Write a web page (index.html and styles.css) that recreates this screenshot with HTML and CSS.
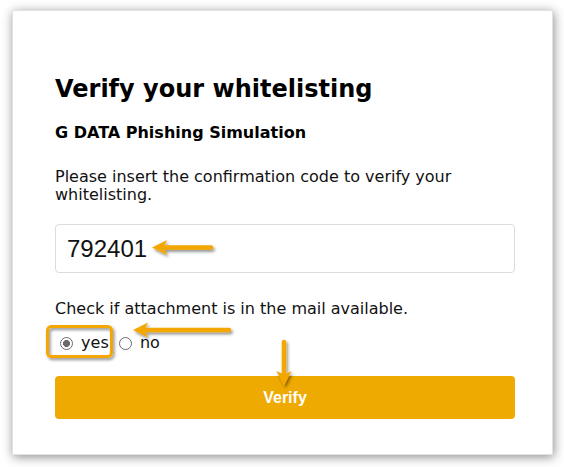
FILE: index.html
```html
<!DOCTYPE html>
<html lang="en">
<head>
<meta charset="utf-8">
<title>Verify your whitelisting</title>
<link rel="stylesheet" href="styles.css">
</head>
<body>
<div class="card">
  <h1 class="title">Verify your whitelisting</h1>
  <h2 class="sub">G DATA Phishing Simulation</h2>
  <p class="text">Please insert the confirmation code to verify your whitelisting.</p>
  <input class="code" type="text" value="792401">
  <p class="text label">Check if attachment is in the mail available.</p>
  <div class="radios">
    <label class="opt"><input class="radio" type="radio" name="att" checked> yes</label>
    <label class="opt"><input class="radio" type="radio" name="att"> no</label>
  </div>
  <button class="btn" type="button">Verify</button>
</div>
<svg class="overlay" width="564" height="467" viewBox="0 0 564 467">
  <defs>
    <filter id="sh" x="-30%" y="-30%" width="160%" height="160%">
      <feDropShadow dx="1.5" dy="2" stdDeviation="1.4" flood-color="#000" flood-opacity="0.45"/>
    </filter>
  </defs>
  <g filter="url(#sh)" fill="#f4a700" stroke="#f4a700" stroke-linecap="round">
    <line x1="211" y1="247.5" x2="162" y2="247.5" stroke-width="4.5"/>
    <polygon stroke="none" points="152,247.5 167,240 163.5,247.5 167,255"/>
    <line x1="229" y1="330" x2="143" y2="330" stroke-width="4.5"/>
    <polygon stroke="none" points="133,330 148,322.5 144.5,330 148,337.5"/>
    <line x1="284" y1="342" x2="284" y2="376" stroke-width="4.5"/>
    <polygon stroke="none" points="284,386 276.5,371 284,374.5 291.5,371"/>
    <rect x="47.5" y="326.5" width="64" height="30" rx="4" fill="none" stroke-width="3"/>
  </g>
</svg>
</body>
</html>
```
FILE: styles.css
```css
html, body {
  margin: 0;
  padding: 0;
  background: #ffffff;
}
body {
  min-height: 467px;
  font-family: "DejaVu Sans", Verdana, sans-serif;
  color: #111;
}
.card {
  box-sizing: border-box;
  width: 541px;
  margin: 10px 0 0 12px;
  padding: 64px 37px 35px 42px;
  background: #fff;
  border: 1px solid #e2e2e2;
  box-shadow: 1px 2px 10px rgba(0, 0, 0, 0.45);
}
.title {
  margin: 0;
  font-size: 24px;
  line-height: 28px;
  font-weight: bold;
  color: #000;
}
.sub {
  margin: 20px 0 0;
  font-size: 16px;
  line-height: 20px;
  font-weight: bold;
  color: #000;
}
.text {
  margin: 25px 0 0;
  font-size: 16px;
  line-height: 18px;
}
.code {
  display: block;
  box-sizing: border-box;
  width: 100%;
  height: 49px;
  margin: 20px 0 0;
  padding: 0 11px;
  border: 1px solid #dcdcdc;
  border-radius: 4px;
  font-family: "Liberation Sans", Arial, sans-serif;
  font-size: 24px;
  color: #111;
  background: #fff;
  outline: none;
}
.label {
  margin-top: 27px;
}
.radios {
  height: 18px;
  margin-top: 16px;
  font-size: 16px;
  line-height: 18px;
}
.opt {
  color: #111;
}
.radio {
  appearance: none;
  -webkit-appearance: none;
  box-sizing: border-box;
  width: 13px;
  height: 13px;
  margin: 3px 3px 0 5px;
  border: 1px solid #6b6b6b;
  border-radius: 50%;
  background: #fff;
  vertical-align: -2px;
}
.radio:checked {
  background: radial-gradient(circle, #6a6a6a 0 3.2px, #fff 3.8px);
}
.btn {
  display: block;
  width: 100%;
  height: 43px;
  margin-top: 24px;
  border: 0;
  border-radius: 4px;
  background: #eeaa00;
  color: #fff;
  font-family: "Liberation Sans", Arial, sans-serif;
  font-weight: bold;
  font-size: 16px;
}
.overlay {
  position: absolute;
  left: 0;
  top: 0;
  pointer-events: none;
}
```
